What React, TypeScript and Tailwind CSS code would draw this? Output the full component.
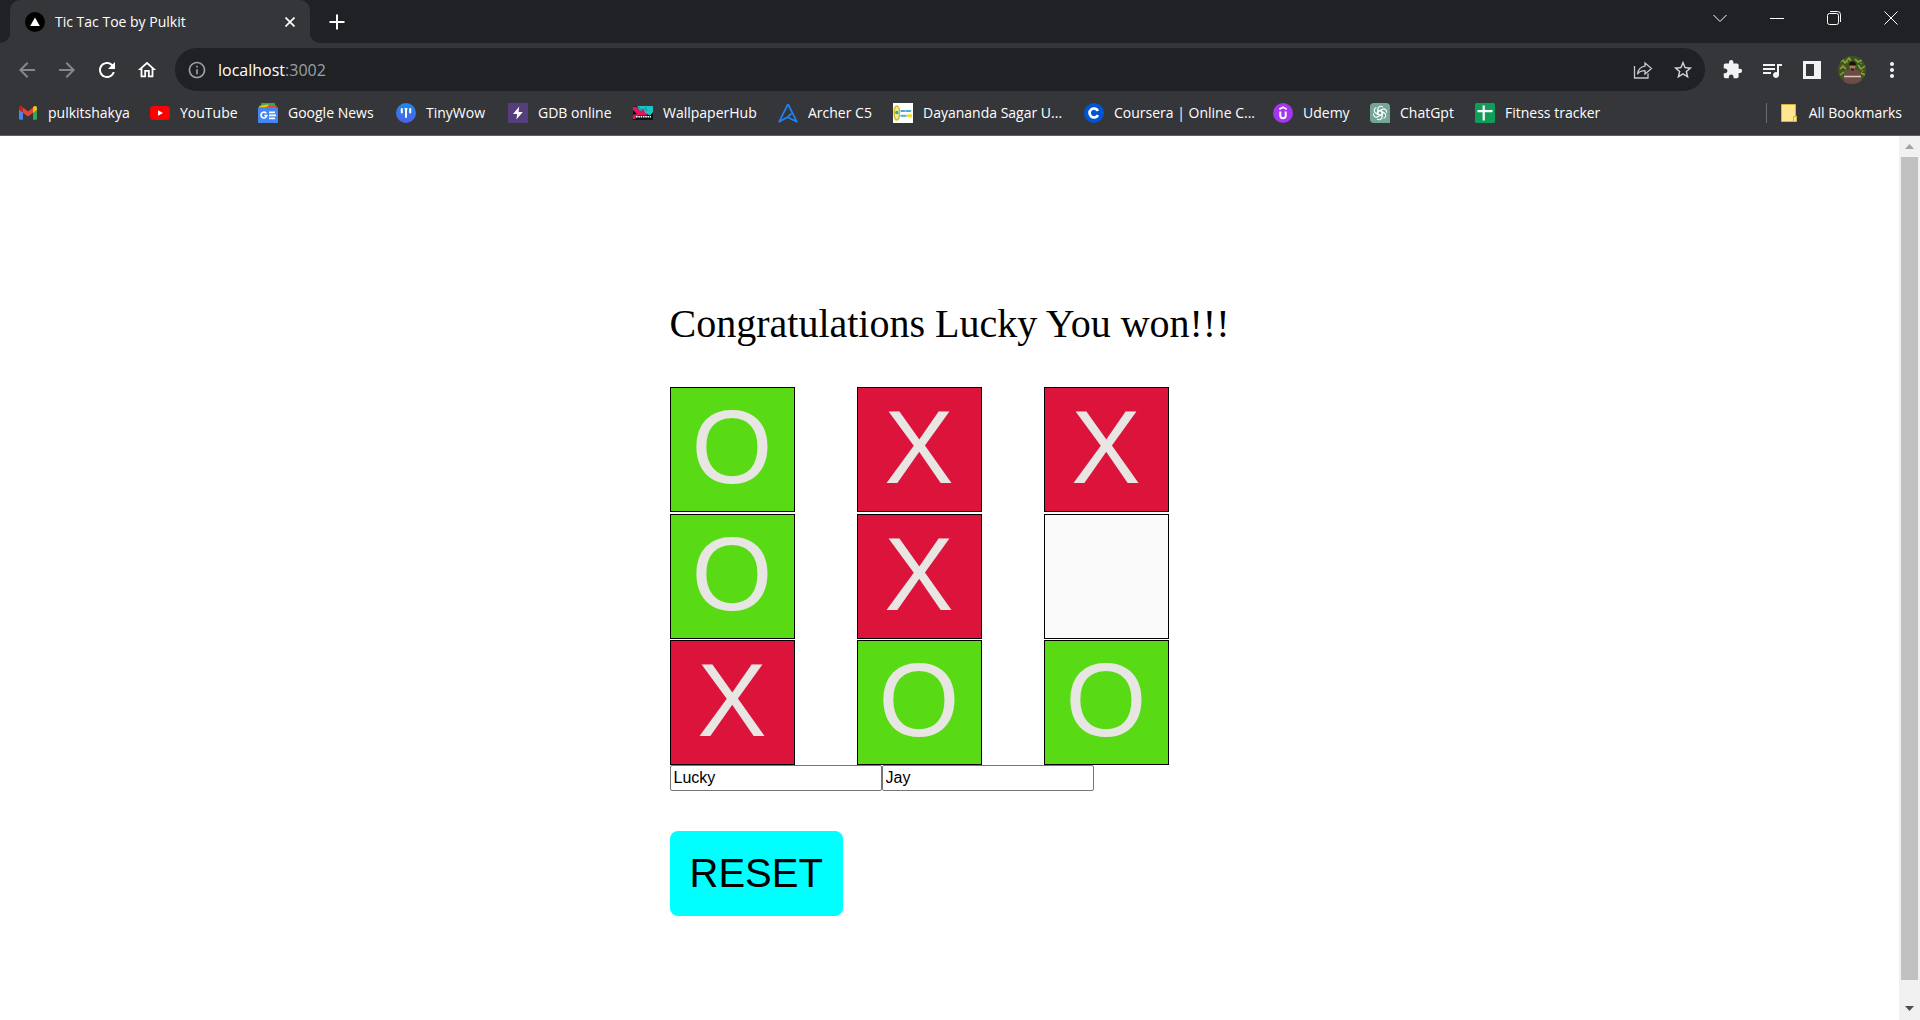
import { useId, useState } from "react";
import type { ReactNode } from "react";
import {
  MdArrowBack,
  MdArrowForward,
  MdExtension,
  MdInfoOutline,
  MdMoreVert,
  MdOutlineHome,
  MdQueueMusic,
  MdRefresh,
  MdStarBorder,
} from "react-icons/md";

type Mark = "X" | "O" | "";

function GmailIcon() {
  return (
    <svg viewBox="0 0 20 20" className="size-5">
      <path d="M1 5v10.500a1.200 1.200 0 0 0 1.200 1.200H5V8z" fill="#4285f4" />
      <path d="M19 5v10.500a1.200 1.200 0 0 1-1.200 1.200H15V8z" fill="#34a853" />
      <path d="M5 4.600v5.200L10 13.500l5-3.700V4.600l-5 3.800z" fill="#ea4335" />
      <path d="M1 5c0-1.900 2-2.400 3.200-1.500L5 4.200v5.600L1 6.800z" fill="#c5221f" />
      <path d="M19 5c0-1.900-2-2.400-3.200-1.500L15 4.200v5.600l4-3z" fill="#fbbc04" />
    </svg>
  );
}

function YouTubeIcon() {
  return (
    <svg viewBox="0 0 20 20" className="size-5">
      <rect x="0" y="3" width="20" height="14" rx="3.500" fill="#ff0000" />
      <path d="M8 7.200v5.600l5-2.800z" fill="#fff" />
    </svg>
  );
}

function NewsIcon() {
  return (
    <svg viewBox="0 0 20 20" className="size-5">
      <rect x="3" y="0" width="14" height="8" rx="0.800" fill="#34a853" />
      <path d="M1 3l9-1.800 2 7H2z" fill="#fbbc04" />
      <path d="M8.500 3.500L18.500 2l-.6 7H8z" fill="#ea4335" />
      <rect x="0" y="4.300" width="20" height="15.700" rx="0.800" fill="#4285f4" />
      <path d="M8.200 10.300a2.900 2.900 0 1 0 .6 2.200H6.300" fill="none" stroke="#fff" strokeWidth="1.700" />
      <path d="M11 9.300h6M11 12.300h7M11 15.300h6" stroke="#fff" strokeWidth="1.700" />
    </svg>
  );
}

function TinyWowIcon() {
  const id = useId();
  return (
    <svg viewBox="0 0 20 20" className="size-5">
      <defs>
        <linearGradient id={id} x1="0" y1="0" x2="0" y2="1">
          <stop offset="0" stopColor="#1f8ae6" />
          <stop offset="1" stopColor="#4f5fe8" />
        </linearGradient>
      </defs>
      <circle cx="10" cy="10" r="10" fill={`url(#${id})`} />
      <path d="M5.800 6v3.500M10 6v8M14.200 6v3.500" stroke="#fff" strokeWidth="2" strokeLinecap="round" />
      <path d="M8.500 5.800h3" stroke="#fff" strokeWidth="1.200" />
    </svg>
  );
}

function GdbIcon() {
  return (
    <svg viewBox="0 0 20 20" className="size-5">
      <rect width="20" height="20" fill="#563d7c" />
      <path d="M11.300 3.500L5 11h4.200l-.9 5.500L14.800 9h-4.200z" fill="#fff" />
    </svg>
  );
}

function WallpaperHubIcon() {
  return (
    <svg viewBox="0 0 20 20" className="size-5">
      <rect y="3" width="20" height="14" fill="#101014" />
      <path d="M4 3h16v6l-3 3.500-4-2-5 1z" fill="#1cc3c6" />
      <path d="M0 3.500l3.500.5 4 4 3-2.500 2 5 2.500 2H5L2 16H0v-4l4-1-4-4z" fill="#e0175c" />
      <path d="M5 3.500l4 4M12 4l2 4" stroke="#0e6f78" strokeWidth="0.800" />
      <path d="M3 13.700h15" stroke="#fff" strokeWidth="1.500" strokeDasharray="1.600 0.700" />
    </svg>
  );
}

function ArcherIcon() {
  return (
    <svg viewBox="0 0 20 20" className="size-5" fill="none" stroke="#1d82f5" strokeWidth="1.800" strokeLinejoin="round">
      <path d="M10 1.200L1.200 18.600l8.300-4.400L13.500 10.500" />
      <path d="M10 1.200l8.800 17.400-9.300-4.400" />
    </svg>
  );
}

function DayanandaIcon() {
  return (
    <svg viewBox="0 0 20 20" className="size-5">
      <rect width="20" height="20" fill="#fff" />
      <ellipse cx="3.800" cy="10" rx="2.600" ry="7" fill="#f3ec9a" stroke="#c9c22a" strokeWidth="1.500" />
      <circle cx="3.800" cy="9.500" r="1.700" fill="#4a9d9f" />
      <path d="M7.500 8h11" stroke="#4eabd8" strokeWidth="2" strokeDasharray="5 0.400" />
      <path d="M7.500 12.800h6" stroke="#4eabd8" strokeWidth="2" />
      <rect x="14" y="11.300" width="5" height="3" fill="#f2e114" />
    </svg>
  );
}

function CourseraIcon() {
  return (
    <svg viewBox="0 0 20 20" className="size-5">
      <circle cx="10" cy="10" r="10" fill="#0056d2" />
      <path d="M14 7.800a4.500 4.500 0 1 0 0 4.400" fill="none" stroke="#fff" strokeWidth="2.700" />
    </svg>
  );
}

function UdemyIcon() {
  return (
    <svg viewBox="0 0 20 20" className="size-5">
      <circle cx="10" cy="10" r="10" fill="#a435f0" />
      <path d="M6.300 6.300L10 4.200l3.700 2.100" fill="none" stroke="#fff" strokeWidth="1.700" />
      <path d="M7.300 8.500v4a2.700 2.700 0 0 0 5.400 0v-4" fill="none" stroke="#fff" strokeWidth="2" />
    </svg>
  );
}

function ChatGptIcon() {
  const petals = [0, 60, 120, 180, 240, 300];
  return (
    <svg viewBox="0 0 20 20" className="size-5">
      <path d="M4 0h12a4 4 0 0 1 4 4v16H4a4 4 0 0 1-4-4V4a4 4 0 0 1 4-4z" fill="#74a698" />
      <g fill="none" stroke="#fff" strokeWidth="1.100" strokeLinejoin="round">
        {petals.map((angle) => (
          <path key={angle} transform={`rotate(${angle} 10 10)`} d="M7.900 11.200V6.200A2.900 2.900 0 0 1 12.900 4.200M7.900 8.800L12 6.400" />
        ))}
      </g>
    </svg>
  );
}

function FitnessIcon() {
  return (
    <svg viewBox="0 0 20 20" className="size-5">
      <rect width="20" height="20" rx="1.500" fill="#0f9d58" />
      <path d="M8.700 2.500v15M2.500 8.200h15" stroke="#fff" strokeWidth="2.200" />
    </svg>
  );
}

const bookmarks: { label: string; icon: ReactNode; width: string }[] = [
  { label: "pulkitshakya", icon: <GmailIcon />, width: "w-[132px]" },
  { label: "YouTube", icon: <YouTubeIcon />, width: "w-[108px]" },
  { label: "Google News", icon: <NewsIcon />, width: "w-[138px]" },
  { label: "TinyWow", icon: <TinyWowIcon />, width: "w-[112px]" },
  { label: "GDB online", icon: <GdbIcon />, width: "w-[125px]" },
  { label: "WallpaperHub", icon: <WallpaperHubIcon />, width: "w-[145px]" },
  { label: "Archer C5", icon: <ArcherIcon />, width: "w-[115px]" },
  { label: "Dayananda Sagar U...", icon: <DayanandaIcon />, width: "w-[191px]" },
  { label: "Coursera | Online C...", icon: <CourseraIcon />, width: "w-[189px]" },
  { label: "Udemy", icon: <UdemyIcon />, width: "w-[97px]" },
  { label: "ChatGpt", icon: <ChatGptIcon />, width: "w-[105px]" },
  { label: "Fitness tracker", icon: <FitnessIcon />, width: "w-[132px]" },
];

function IconButton({ label, children }: { label: string; children: ReactNode }) {
  return (
    <button type="button" aria-label={label} className="flex h-10 w-10 shrink-0 items-center justify-center">
      {children}
    </button>
  );
}

function WindowButton({ label, path }: { label: string; path: string }) {
  return (
    <button type="button" aria-label={label} className="flex h-9 w-[57px] items-center justify-center">
      <svg viewBox="0 0 14 14" className="size-[14px]" fill="none" stroke="#fff" strokeWidth="1">
        <path d={path} />
      </svg>
    </button>
  );
}

function TabStrip() {
  return (
    <div className="flex h-[43px] items-start justify-between bg-[#202124]">
      <div className="flex h-full items-end">
        <svg viewBox="0 0 10 10" className="size-[10px]">
          <path d="M10 0v10H0A10 10 0 0 0 10 0z" fill="#35363a" />
        </svg>
        <div className="flex h-full w-[300px] items-center rounded-t-[10px] bg-[#35363a] pr-3 pl-[15px]">
          <svg viewBox="0 0 20 20" className="size-5">
            <circle cx="10" cy="10" r="10" fill="#000" />
            <path d="M10 5.500l4.800 8.500H5.200z" fill="#fff" />
          </svg>
          <span className="ml-[10px] flex-1 text-sm whitespace-nowrap text-white">Tic Tac Toe by Pulkit</span>
          <button type="button" aria-label="Close tab" className="p-[3px]">
            <svg viewBox="0 0 10 10" className="size-[10px]" stroke="#fff" strokeWidth="1.700">
              <path d="M0.500 0.500l9 9M9.500 0.500l-9 9" />
            </svg>
          </button>
        </div>
        <svg viewBox="0 0 10 10" className="size-[10px]">
          <path d="M0 0v10h10A10 10 0 0 1 0 0z" fill="#35363a" />
        </svg>
        <button type="button" aria-label="New tab" className="flex h-full w-[34px] items-center justify-center">
          <svg viewBox="0 0 16 16" className="size-4" stroke="#fff" strokeWidth="2">
            <path d="M8 0.500v15M0.500 8h15" />
          </svg>
        </button>
      </div>
      <div className="flex pr-px">
        <WindowButton label="Search tabs" path="M0.500 4l6.500 6.500L13.500 4" />
        <WindowButton label="Minimize" path="M0 7.500h14" />
        <WindowButton
          label="Restore"
          path="M2.500 2.500h7a2 2 0 0 1 2 2v7a2 2 0 0 1-2 2h-7a2 2 0 0 1-2-2v-7a2 2 0 0 1 2-2zM3 0.500h7.500a3 3 0 0 1 3 3V11"
        />
        <WindowButton label="Close" path="M0.500 0.500l13 13M13.500 0.500l-13 13" />
      </div>
    </div>
  );
}

function Avatar() {
  const id = useId();
  return (
    <svg viewBox="0 0 28 28" className="size-7">
      <defs>
        <clipPath id={id}>
          <circle cx="14" cy="14" r="14" />
        </clipPath>
      </defs>
      <g clipPath={`url(#${id})`}>
        <rect width="28" height="28" fill="#3f5520" />
        <path d="M2 6l3-2 2 3 4-5 2 3M17 3l3 3 4-2M2 13l3-3 3 3M20 9l3 4 4-3M2 19l4-3M23 17l4 2" stroke="#86a83c" strokeWidth="1.500" fill="none" />
        <path d="M4 9l2 2M9 5l1 2M22 7l2 1M24 14l1 2M7 15l1 1" stroke="#c0603a" strokeWidth="1.300" />
        <path d="M6 28V18c0-3 3-4 6-4.500h4c4 .5 7 2 7 5V28z" fill="#6d4c48" />
        <path d="M6 20.500h17" stroke="#d6c6ba" strokeWidth="1.400" />
        <ellipse cx="14.500" cy="10" rx="3" ry="4" fill="#b0755a" />
        <path d="M11 9c0-5 7-5 7 0l-1 .5h-5z" fill="#17110f" />
        <path d="M12.500 12.500h4l-1 2h-2z" fill="#2a1813" />
      </g>
    </svg>
  );
}

function Toolbar() {
  return (
    <div className="flex h-[53px] items-center bg-[#35363a] px-2">
      <div className="-ml-px flex text-white">
        <IconButton label="Back">
          <MdArrowBack className="size-6 text-[#86878a]" />
        </IconButton>
        <IconButton label="Forward">
          <MdArrowForward className="size-6 text-[#86878a]" />
        </IconButton>
        <IconButton label="Reload">
          <MdRefresh className="size-6" />
        </IconButton>
        <IconButton label="Home">
          <MdOutlineHome className="size-[22px]" />
        </IconButton>
      </div>
      <div className="mr-[7px] ml-2 flex h-[43px] min-w-0 flex-1 items-center rounded-full bg-[#202124] pr-0.5 pl-3">
        <MdInfoOutline className="size-5 shrink-0 text-[#9aa0a6]" />
        <a href="#" className="ml-[11px] flex-1 text-base text-white">
          localhost<span className="text-[#9aa0a6]">:3002</span>
        </a>
        <IconButton label="Share this page">
          <svg viewBox="0 0 20 20" className="size-5" fill="none" stroke="#c4c7cb" strokeWidth="1.300" strokeLinejoin="miter">
            <path d="M1.500 6v12h13.500v-4.500" />
            <path d="M12 3l6.500 5.500L12 14v-3.300c-3.500 0-6 1-7.500 3.600C5 9.800 7.500 6.800 12 6.200z" />
          </svg>
        </IconButton>
        <IconButton label="Bookmark this tab">
          <MdStarBorder className="size-[22px] text-[#d0d3d7]" />
        </IconButton>
      </div>
      <div className="flex text-[#f1f3f4]">
        <IconButton label="Extensions">
          <MdExtension className="size-[21px]" />
        </IconButton>
        <IconButton label="Media control">
          <MdQueueMusic className="size-6" />
        </IconButton>
        <IconButton label="Side panel">
          <svg viewBox="0 0 18 18" className="size-[18px]">
            <path d="M0 0h18v18H0zM3 3v12h8V3z" fill="#f1f3f4" fillRule="evenodd" />
          </svg>
        </IconButton>
        <IconButton label="Profile">
          <Avatar />
        </IconButton>
        <IconButton label="Menu">
          <MdMoreVert className="size-6" />
        </IconButton>
      </div>
    </div>
  );
}

function BookmarksBar() {
  return (
    <nav aria-label="Bookmarks" className="flex h-10 items-center border-b border-[#5f6063] bg-[#35363a] px-[18px] pb-1.5 text-sm text-white">
      {bookmarks.map(({ label, icon, width }) => (
        <a key={label} href="#" className={`flex shrink-0 items-center gap-[10px] whitespace-nowrap ${width}`}>
          <span className="shrink-0">{icon}</span>
          {label}
        </a>
      ))}
      <a href="#" className="ml-auto flex h-5 shrink-0 items-center gap-3 border-l border-[#6b6c70] pl-[14px] whitespace-nowrap">
        <svg viewBox="0 0 16 18" className="h-[18px] w-4">
          <path d="M0.500 0.500h14v11.500h1v5.500H0.500z" fill="#ffe68f" stroke="#d9b13b" />
          <path d="M12.500 17v-4.500h3" fill="none" stroke="#d9b13b" />
        </svg>
        All Bookmarks
      </a>
    </nav>
  );
}

const finalBoard: Mark[] = ["O", "X", "X", "O", "X", "", "X", "O", "O"];

const cellColor: Record<Mark, string> = {
  O: "bg-[#58db15]",
  X: "bg-[#dc143c]",
  "": "bg-[#fafafa]",
};

function Game() {
  const [board, setBoard] = useState<Mark[]>(finalBoard);
  const [first, setFirst] = useState("Lucky");
  const [second, setSecond] = useState("Jay");

  return (
    <main className="flex flex-1 justify-center bg-white pt-[165px] text-black">
      <div>
        <h1 className="mb-10 font-['Liberation_Serif',serif] text-[40px] leading-[46px] whitespace-nowrap">
          Congratulations {first} You won!!!
        </h1>
        <div className="grid h-[378px] grid-cols-[repeat(3,125px)] content-between gap-x-[62px]">
          {board.map((mark, index) => (
            <button
              key={index}
              type="button"
              aria-label={`Square ${index + 1}`}
              className={`flex h-[125px] items-center justify-center border border-black pb-1 font-['Liberation_Sans',sans-serif] text-[104px] leading-[115px] text-[#e8e6e3] ${cellColor[mark]}`}
            >
              {mark}
            </button>
          ))}
        </div>
        <div className="flex font-['Liberation_Sans',sans-serif]">
          <input
            aria-label="First player"
            value={first}
            onChange={(event) => setFirst(event.target.value)}
            className="h-[26px] w-[212px] rounded-[2px] border border-[#767676] bg-white px-[3px] text-base"
          />
          <input
            aria-label="Second player"
            value={second}
            onChange={(event) => setSecond(event.target.value)}
            className="h-[26px] w-[212px] rounded-[2px] border border-[#767676] bg-white px-[3px] text-base"
          />
        </div>
        <button
          type="button"
          onClick={() => setBoard(Array<Mark>(9).fill(""))}
          className="mt-10 rounded-lg bg-[#00ffff] p-5 font-['Liberation_Sans',sans-serif] text-[40px] leading-[45px]"
        >
          RESET
        </button>
      </div>
    </main>
  );
}

function Scrollbar() {
  return (
    <div aria-hidden="true" className="flex w-[21px] flex-col items-center bg-[#f1f1f1]">
      <div className="flex h-[21px] items-center">
        <svg viewBox="0 0 9 5" className="h-[5px] w-[9px]">
          <path d="M4.500 0L9 5H0z" fill="#a3a3a3" />
        </svg>
      </div>
      <div className="w-[17px] flex-1 bg-[#c1c1c1]" />
      <div className="flex h-10 items-end pb-[9px]">
        <svg viewBox="0 0 9 5" className="h-[5px] w-[9px]">
          <path d="M4.500 5L9 0H0z" fill="#505050" />
        </svg>
      </div>
    </div>
  );
}

export default function App() {
  return (
    <div className="flex h-screen flex-col overflow-hidden font-['Open_Sans','Noto_Sans',sans-serif]">
      <header className="shrink-0">
        <TabStrip />
        <Toolbar />
        <BookmarksBar />
      </header>
      <div className="flex min-h-0 flex-1">
        <Game />
        <Scrollbar />
      </div>
    </div>
  );
}
